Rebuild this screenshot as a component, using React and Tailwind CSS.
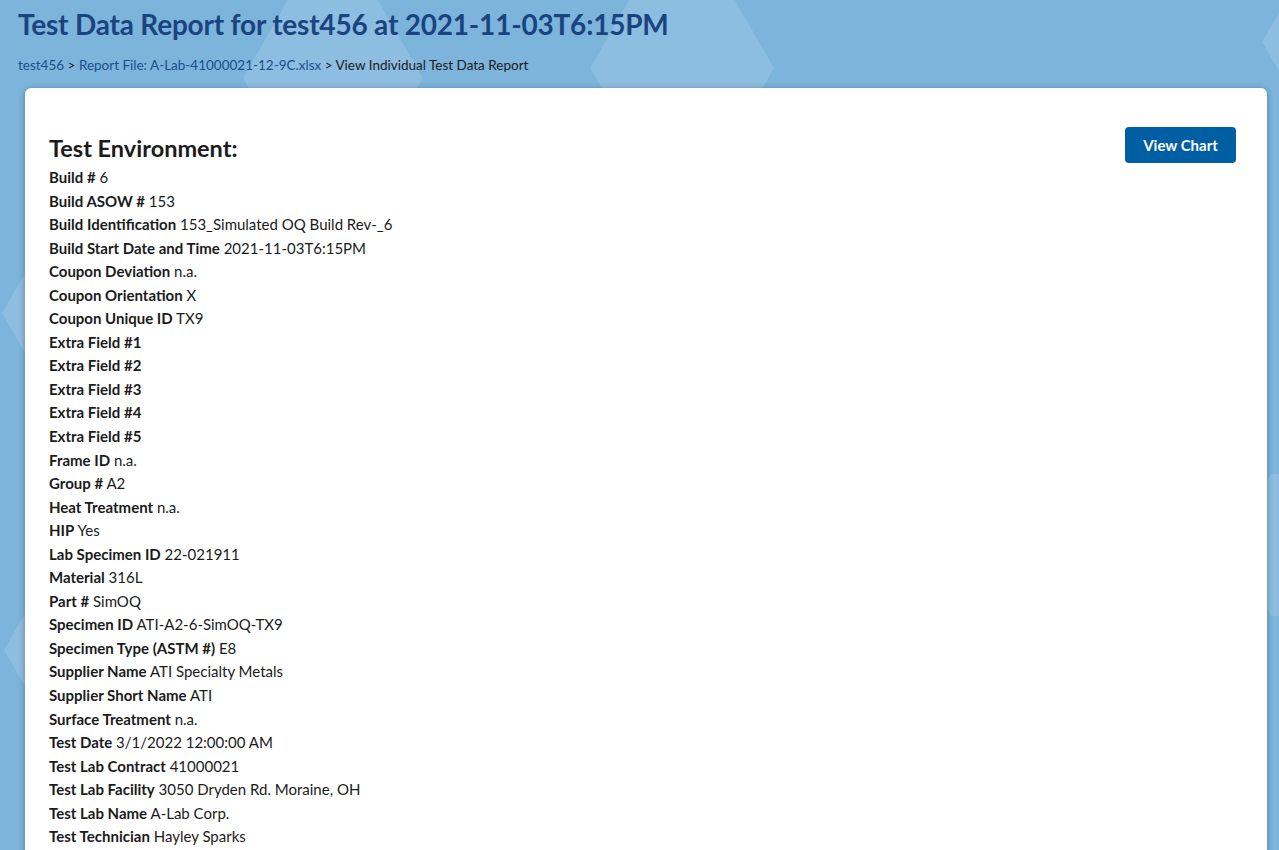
import React from 'react'

const fields = [
  ['Build #', '6'],
  ['Build ASOW #', '153'],
  ['Build Identification', '153_Simulated OQ Build Rev-_6'],
  ['Build Start Date and Time', '2021-11-03T6:15PM'],
  ['Coupon Deviation', 'n.a.'],
  ['Coupon Orientation', 'X'],
  ['Coupon Unique ID', 'TX9'],
  ['Extra Field #1', ''],
  ['Extra Field #2', ''],
  ['Extra Field #3', ''],
  ['Extra Field #4', ''],
  ['Extra Field #5', ''],
  ['Frame ID', 'n.a.'],
  ['Group #', 'A2'],
  ['Heat Treatment', 'n.a.'],
  ['HIP', 'Yes'],
  ['Lab Specimen ID', '22-021911'],
  ['Material', '316L'],
  ['Part #', 'SimOQ'],
  ['Specimen ID', 'ATI-A2-6-SimOQ-TX9'],
  ['Specimen Type (ASTM #)', 'E8'],
  ['Supplier Name', 'ATI Specialty Metals'],
  ['Supplier Short Name', 'ATI'],
  ['Surface Treatment', 'n.a.'],
  ['Test Date', '3/1/2022 12:00:00 AM'],
  ['Test Lab Contract', '41000021'],
  ['Test Lab Facility', '3050 Dryden Rd. Moraine, OH'],
  ['Test Lab Name', 'A-Lab Corp.'],
  ['Test Technician', 'Hayley Sparks'],
]

const hex = (cx, cy, r) => {
  const h = r * 0.866
  return [
    [cx - r, cy],
    [cx - r / 2, cy - h],
    [cx + r / 2, cy - h],
    [cx + r, cy],
    [cx + r / 2, cy + h],
    [cx - r / 2, cy + h],
  ]
    .map((p) => p.join(','))
    .join(' ')
}

const HexBackground = () => (
  <svg className="absolute inset-0 w-full h-full" viewBox="0 0 1279 850" preserveAspectRatio="none">
    <g fill="#ffffff" fillOpacity="0.13">
      <polygon points={hex(333, 78, 90)} />
      <polygon points={hex(682, 68, 92)} />
      <polygon points={hex(1352, 42, 90)} />
      <polygon points={hex(52, 313, 50)} />
      <polygon points={hex(52, 650, 48)} />
      <polygon points={hex(1312, 545, 82)} />
    </g>
  </svg>
)

export default function App() {
  return (
    <div className="relative h-[850px] overflow-hidden bg-[#7cb4dc] font-['Lato','Liberation_Sans',sans-serif] text-[#1b1b1b]">
      <HexBackground />
      <div className="relative">
        <header className="px-[18px] pt-[6px]">
          <h1 className="text-[28px] leading-[36px] font-bold text-[#1a4480] tracking-[-0.2px]">
            Test Data Report for test456 at 2021-11-03T6:15PM
          </h1>
          <nav className="mt-[13px] text-[13.5px] leading-[20px]">
            <a href="#" className="text-[#1a4f8c]">test456</a>
            <span> &gt; </span>
            <a href="#" className="text-[#1a4f8c]">Report File: A-Lab-41000021-12-9C.xlsx</a>
            <span> &gt; View Individual Test Data Report</span>
          </nav>
        </header>

        <main className="mx-[25px] mt-[13px] w-[1242px] rounded-md bg-white pt-[39px] pb-16 px-6 shadow-[0_1px_6px_rgba(0,0,0,0.3)]">
          <div className="flex justify-between items-start">
            <h2 className="mt-[7px] text-[23.5px] leading-[29px] font-bold">Test Environment:</h2>
            <button className="mr-[7px] h-[36px] w-[111px] rounded bg-[#005ea2] text-[15px] font-bold text-white">
              View Chart
            </button>
          </div>
          <div className="mt-[3px] text-[15px] leading-[23.54px]">
            {fields.map(([label, value]) => (
              <div key={label}>
                <span className="font-bold">{label}</span>
                {value ? ' ' + value : ' '}
              </div>
            ))}
          </div>
        </main>
      </div>
    </div>
  )
}
